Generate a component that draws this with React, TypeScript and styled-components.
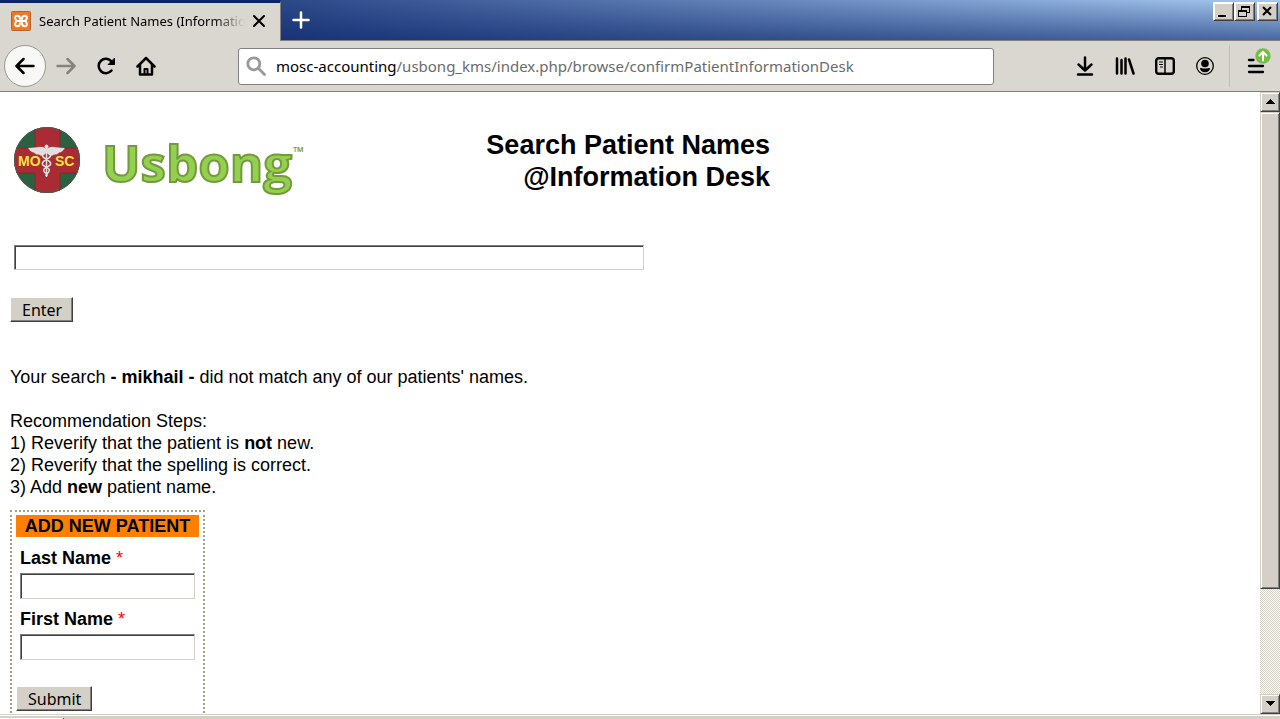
import React from 'react';
import styled, { createGlobalStyle, css } from 'styled-components';

const ui = '"Noto Sans", "Open Sans", sans-serif';
const face = '#d4d0c8';

const Global = createGlobalStyle`
  *, *::before, *::after { box-sizing: border-box; }
  html, body, #root { height: 100%; }
  body { margin: 0; background: #fff; color: #000; overflow: hidden; }
`;

const raised = css`
  background: ${face};
  border: 1px solid;
  border-color: ${face} #404040 #404040 ${face};
  box-shadow: inset 1px 1px #fff, inset -1px -1px #808080;
`;

const Window = styled.div`
  display: flex;
  flex-direction: column;
  height: 100vh;
`;

const TitleBar = styled.header`
  display: flex;
  flex: none;
  align-items: stretch;
  height: 41px;
  background:
    linear-gradient(to bottom, transparent, rgba(10, 36, 106, 0.6)),
    linear-gradient(to right, #0a246a, #a6caf0);
  border-bottom: 1px solid #808080;
`;

const Tab = styled.div`
  display: flex;
  align-items: center;
  gap: 8px;
  width: 281px;
  margin-bottom: -1px;
  padding: 0 15px 2px 11px;
  background: #dad7d0;
  border-top: 3px solid #0a246a;
  border-right: 1px solid #808080;
`;

const TabTitle = styled.span`
  flex: 1;
  overflow: hidden;
  white-space: nowrap;
  font: 13px/20px ${ui};
  mask-image: linear-gradient(to right, #000 85%, transparent);
`;

const PlainButton = styled.button`
  display: flex;
  align-items: center;
  justify-content: center;
  padding: 0;
  border: 0;
  background: none;
  color: #000;
`;

const NewTab = styled(PlainButton)`
  width: 40px;
`;

const WindowButtons = styled.div`
  display: flex;
  align-items: flex-start;
  margin-left: auto;
  padding: 2px;
`;

const WindowButton = styled.button<{ $apart?: boolean }>`
  ${raised}
  display: flex;
  width: 21px;
  height: 19px;
  padding: 0;
  border-color: #fff #404040 #404040 #fff;
  margin-left: ${p => (p.$apart ? 2 : 0)}px;
`;

const Toolbar = styled.nav`
  display: flex;
  flex: none;
  align-items: center;
  height: 51px;
  padding: 0 4px;
  background: #dad7d0;
  border-bottom: 1px solid #808080;
`;

const ToolButton = styled(PlainButton)`
  width: 40px;
  height: 40px;
`;

const BackButton = styled(PlainButton)`
  width: 42px;
  height: 42px;
  border: 1px solid #9a9894;
  border-radius: 50%;
  background: #f8f8f6;
`;

const AddressBar = styled.div`
  display: flex;
  flex: 1;
  align-items: center;
  gap: 10px;
  height: 37px;
  margin: 0 71px 0 72px;
  padding: 0 7px;
  background: #fff;
  border: 1px solid #808080;
  border-radius: 3px;
`;

const Address = styled.a`
  color: #6b6b6b;
  text-decoration: none;
  white-space: nowrap;
  font: 15px/20px ${ui};
  strong { font-weight: 400; color: #000; }
`;

const Divider = styled.span`
  width: 1px;
  height: 42px;
  margin: 0 6px 0 4px;
  background: #c1beb7;
`;

const MenuButton = styled(ToolButton)`
  position: relative;
`;

const Badge = styled.svg`
  position: absolute;
  top: 2px;
  right: 5px;
`;

const Viewport = styled.div`
  display: flex;
  flex: 1;
  min-height: 0;
`;

const Page = styled.main`
  flex: 1;
  overflow: hidden;
  padding: 32px 10px 0;
  font: 18px/22px "Liberation Sans", Arial, sans-serif;
`;

const Banner = styled.div`
  display: flex;
  align-items: flex-start;
  justify-content: space-between;
  max-width: 760px;
  height: 121px;
`;

const Brand = styled.div`
  display: flex;
  gap: 22px;
  padding: 2px 3px;
`;

const Heading = styled.h1`
  margin: 5px 0 0;
  text-align: right;
  font-size: 27px;
  line-height: 32px;
`;

const Field = styled.input`
  display: block;
  width: 100%;
  height: 26px;
  padding: 1px 4px;
  background: #fff;
  border: 1px solid;
  border-color: #808080 ${face} ${face} #808080;
  border-radius: 0;
  box-shadow: inset 1px 1px #404040;
  font: 16px/20px ${ui};
  outline: 0;
`;

const SearchField = styled(Field)`
  width: 630px;
  height: 25px;
  margin: 0 4px 27px;
`;

const PushButton = styled.button`
  display: block;
  height: 25px;
  padding: 0 10px 0 11px;
  background: ${face};
  border: 1px solid;
  border-color: #fff #404040 #404040 #fff;
  box-shadow: inset -1px -1px #808080;
  color: #000;
  font: 16px/22px ${ui};
`;

const Result = styled.p`
  margin: 44px 0 22px;
`;

const Steps = styled.div`
  margin-bottom: 12px;
`;

const PatientForm = styled.form`
  width: 195px;
  padding: 3px 4px 40px;
  border: 2px dotted #ab9c7d;
`;

const FormTitle = styled.h2`
  margin: 0 0 10px;
  background: #ff8000;
  text-align: center;
  font-size: 18px;
  line-height: 22px;
`;

const FormRow = styled.div`
  margin: 0 4px 9px;
`;

const Label = styled.label`
  display: block;
  margin-bottom: 4px;
  font-weight: 700;
  span { color: #f00; font-weight: 400; }
`;

const Actions = styled.div`
  padding-top: 17px;
`;

const ScrollTrack = styled.div`
  display: flex;
  flex-direction: column;
  width: 20px;
  background: repeating-conic-gradient(#fff 0 25%, ${face} 0 50%) 0 0 / 2px 2px;
`;

const ScrollButton = styled.button`
  ${raised}
  display: flex;
  flex: none;
  align-items: center;
  justify-content: center;
  height: 20px;
  padding: 0;
`;

const ScrollThumb = styled.div`
  ${raised}
  height: 82%;
`;

const ScrollLane = styled.div`
  flex: 1;
`;

const StatusBar = styled.footer`
  display: flex;
  flex: none;
  height: 5px;
  background: ${face};
  border-top: 1px solid ${face};
  box-shadow: inset 0 1px #fff;
  align-items: flex-end;
`;

const StatusPart = styled.div`
  width: 64px;
  height: 1px;
  background: #fff;
  border-right: 1px solid #404040;
`;

const stroke = { fill: 'none', stroke: 'currentColor', strokeLinecap: 'round', strokeLinejoin: 'round' } as const;

const Favicon = () => (
  <svg width="20" height="20" viewBox="0 0 20 20">
    <rect x="0.5" y="0.5" width="19" height="19" rx="1" fill="#f37623" stroke="#b8622b" />
    <path d="M9 8 C9 6 8 4.800 6.200 4.800 C3.500 4.800 3.500 8.500 6 9.900 C3.500 11.500 3.500 15.200 6.200 15.200 C8 15.200 9 14 9 12 M11 8 C11 6 12 4.800 13.800 4.800 C16.500 4.800 16.500 8.500 14 9.900 C16.500 11.500 16.500 15.200 13.800 15.200 C12 15.200 11 14 11 12 M6 9.900 H14" fill="none" stroke="#fff" strokeWidth="2" strokeLinecap="round" />
  </svg>
);

const Seal = () => (
  <svg width="68" height="68" viewBox="0 0 68 68" role="img" aria-label="MOSC">
    <defs><clipPath id="disc"><circle cx="34" cy="34" r="33" /></clipPath></defs>
    <g clipPath="url(#disc)">
      <rect width="68" height="68" fill="#2a6140" />
      <path d="M22 0 H47 V22 H68 V47 H47 V68 H22 V47 H0 V22 H22 Z" fill="#ab2b34" stroke="#7a2c2c" />
    </g>
    <circle cx="34" cy="34" r="32.500" fill="none" stroke="#4d5a50" />
    <g fill="#e4dfdf" stroke="#e4dfdf">
      <path d="M33.500 23 C28 19 24 22.500 15.500 22 C17 26 20 26 21 26.500 C23 29 26 28 27 29 C29 30.500 32 29 33.500 26 C35 29 38 30.500 40 29 C41 28 44 29 46 26.500 C47 26 50 26 51.500 22 C43 22.500 39 19 33.500 23 Z" strokeWidth="0.300" />
      <circle cx="33.500" cy="20.500" r="1.500" />
      <path d="M33.500 21 V51" strokeWidth="1.500" />
      <path d="M30.500 28 C25.500 32 40 34 37.500 38.500 C36 41 29 42 31 45.500 C32 47.500 35 47 34 50 M36.500 28 C41.500 32 27 34 29.500 38.500 C31 41 38 42 36 45.500 C35 47.500 33 47 33 50" fill="none" strokeWidth="1.500" />
    </g>
    <g fill="#f8e53c" fontFamily="Liberation Sans, sans-serif" fontWeight="700" fontSize="14">
      <text x="5" y="40">MO</text>
      <text x="42" y="40">SC</text>
    </g>
  </svg>
);

const Wordmark = () => (
  <svg width="210" height="80" viewBox="0 0 210 80" role="img" aria-label="Usbong">
    <text x="-1" y="56" fontFamily="Open Sans, sans-serif" fontWeight="700" fontSize="51" fill="#92d050" stroke="#76993c" strokeWidth="2">
      Usbong<tspan dx="1" dy="-25" fontSize="14" fill="#76993c" stroke="none">™</tspan>
    </text>
  </svg>
);

export default function App() {
  return (
    <Window>
      <Global />
      <TitleBar>
        <Tab>
          <Favicon />
          <TabTitle>Search Patient Names (Information Desk)</TabTitle>
          <PlainButton aria-label="Close tab">
            <svg width="12" height="12" viewBox="0 0 12 12" {...stroke} strokeWidth="2"><path d="M1 1 L11 11 M11 1 L1 11" /></svg>
          </PlainButton>
        </Tab>
        <NewTab aria-label="New tab">
          <svg width="18" height="18" viewBox="0 0 18 18" {...stroke} stroke="#fff" strokeWidth="2.500"><path d="M9 1.500 V16.500 M1.500 9 H16.500" /></svg>
        </NewTab>
        <WindowButtons>
          <WindowButton aria-label="Minimize"><svg width="19" height="17" shapeRendering="crispEdges"><path d="M4 12 H12 V14 H4 Z" /></svg></WindowButton>
          <WindowButton aria-label="Restore"><svg width="19" height="17" shapeRendering="crispEdges"><path d="M6 3 H15 V10 H12 V9 H14 V5 H7 V7 H6 Z M3 7 H12 V14 H3 Z M4 9 V13 H11 V9 Z" fillRule="evenodd" /></svg></WindowButton>
          <WindowButton $apart aria-label="Close"><svg width="19" height="17"><path d="M5 4 L13 12 M13 4 L5 12" stroke="#000" strokeWidth="2" /></svg></WindowButton>
        </WindowButtons>
      </TitleBar>
      <Toolbar>
        <BackButton aria-label="Back">
          <svg width="20" height="20" viewBox="0 0 20 20" {...stroke} strokeWidth="2.500"><path d="M18.500 10 H2 M8.500 3 L1.500 10 L8.500 17" /></svg>
        </BackButton>
        <ToolButton aria-label="Forward">
          <svg width="20" height="20" viewBox="0 0 20 20" {...stroke} stroke="#858380" strokeWidth="2.500"><path d="M1.500 10 H18 M11.500 3 L18.500 10 L11.500 17" /></svg>
        </ToolButton>
        <ToolButton aria-label="Reload">
          <svg width="20" height="20" viewBox="0 0 20 20" {...stroke} strokeWidth="2.500"><path d="M15.500 14.500 A7.200 7.200 0 1 1 15.500 5.500 L17 7" /><path d="M18.500 2.500 V8.500 H12.500 Z" fill="#000" strokeWidth="1" /></svg>
        </ToolButton>
        <ToolButton aria-label="Home">
          <svg width="20" height="20" viewBox="0 0 20 20" {...stroke} strokeWidth="2.500"><path d="M1.500 10.500 L10 2 L18.500 10.500 M4 9 V18.500 H16 V9" /><path d="M8.500 18 V13 H11.500 V18" strokeWidth="2" /></svg>
        </ToolButton>
        <AddressBar>
          <svg width="20" height="20" viewBox="0 0 20 20" {...stroke} stroke="#999" strokeWidth="2.800"><circle cx="7.800" cy="7.800" r="6" /><path d="M12.500 12.500 L18.500 18.500" /></svg>
          <Address href="#"><strong>mosc-accounting</strong>/usbong_kms/index.php/browse/confirmPatientInformationDesk</Address>
        </AddressBar>
        <ToolButton aria-label="Downloads">
          <svg width="20" height="20" viewBox="0 0 20 20" {...stroke} strokeWidth="2.500"><path d="M10 1.500 V14 M3.500 8.500 L10 14.500 L16.500 8.500 M3 18.500 H17" /></svg>
        </ToolButton>
        <ToolButton aria-label="Library">
          <svg width="20" height="20" viewBox="0 0 20 20" {...stroke} strokeWidth="2.500"><path d="M2 2.500 V17.500 M6.500 4 V17.500 M10.500 2.500 V17.500 M14 3.500 L18.500 17.500" /></svg>
        </ToolButton>
        <ToolButton aria-label="Sidebars">
          <svg width="20" height="20" viewBox="0 0 20 20" {...stroke} strokeWidth="1.500"><rect x="1.200" y="2.200" width="17.600" height="15.600" rx="2.500" strokeWidth="2.400" /><path d="M10 2 V18" /><path d="M4.500 6 H7.500 M4.500 8.500 H7.500 M5.500 11 H7.500" strokeWidth="1" /></svg>
        </ToolButton>
        <ToolButton aria-label="Account">
          <svg width="20" height="20" viewBox="0 0 20 20"><circle cx="10" cy="10" r="8.300" fill="none" stroke="#000" strokeWidth="1.300" /><circle cx="10" cy="7.500" r="3.800" /><path d="M5 12 C6 11.700 7 12.600 10 12.600 C13 12.600 14 11.700 15 12 C15 14.500 13 16.200 10 16.200 C7 16.200 5 14.500 5 12 Z" /></svg>
        </ToolButton>
        <Divider />
        <MenuButton aria-label="Menu">
          <svg width="20" height="20" viewBox="0 0 20 20" {...stroke} strokeWidth="2.300"><path d="M3 4 H7.500 M3 10 H17 M3 16 H17" /></svg>
          <Badge width="16" height="16" viewBox="0 0 16 16"><circle cx="8" cy="8" r="7.700" fill="#74bf43" /><path d="M8 12.500 V4 M4.500 7.500 L8 4 L11.500 7.500" fill="none" stroke="#fff" strokeWidth="2" strokeLinecap="round" /></Badge>
        </MenuButton>
      </Toolbar>
      <Viewport>
        <Page>
          <Banner>
            <Brand><Seal /><Wordmark /></Brand>
            <Heading>Search Patient Names<br />@Information Desk</Heading>
          </Banner>
          <SearchField type="text" aria-label="Patient name" />
          <PushButton type="button">Enter</PushButton>
          <Result>Your search <b>- mikhail -</b> did not match any of our patients' names.</Result>
          <Steps>
            Recommendation Steps:<br />
            1) Reverify that the patient is <b>not</b> new.<br />
            2) Reverify that the spelling is correct.<br />
            3) Add <b>new</b> patient name.
          </Steps>
          <PatientForm>
            <FormTitle>ADD NEW PATIENT</FormTitle>
            <FormRow>
              <Label htmlFor="last">Last Name <span>*</span></Label>
              <Field id="last" type="text" />
            </FormRow>
            <FormRow>
              <Label htmlFor="first">First Name <span>*</span></Label>
              <Field id="first" type="text" />
            </FormRow>
            <Actions><PushButton type="button">Submit</PushButton></Actions>
          </PatientForm>
        </Page>
        <ScrollTrack>
          <ScrollButton aria-label="Scroll up"><svg width="10" height="6" shapeRendering="crispEdges"><path d="M0 5 L5 0 L10 5 Z" /></svg></ScrollButton>
          <ScrollLane><ScrollThumb /></ScrollLane>
          <ScrollButton aria-label="Scroll down"><svg width="10" height="6" shapeRendering="crispEdges"><path d="M0 0 H10 L5 5 Z" /></svg></ScrollButton>
        </ScrollTrack>
      </Viewport>
      <StatusBar><StatusPart /></StatusBar>
    </Window>
  );
}
